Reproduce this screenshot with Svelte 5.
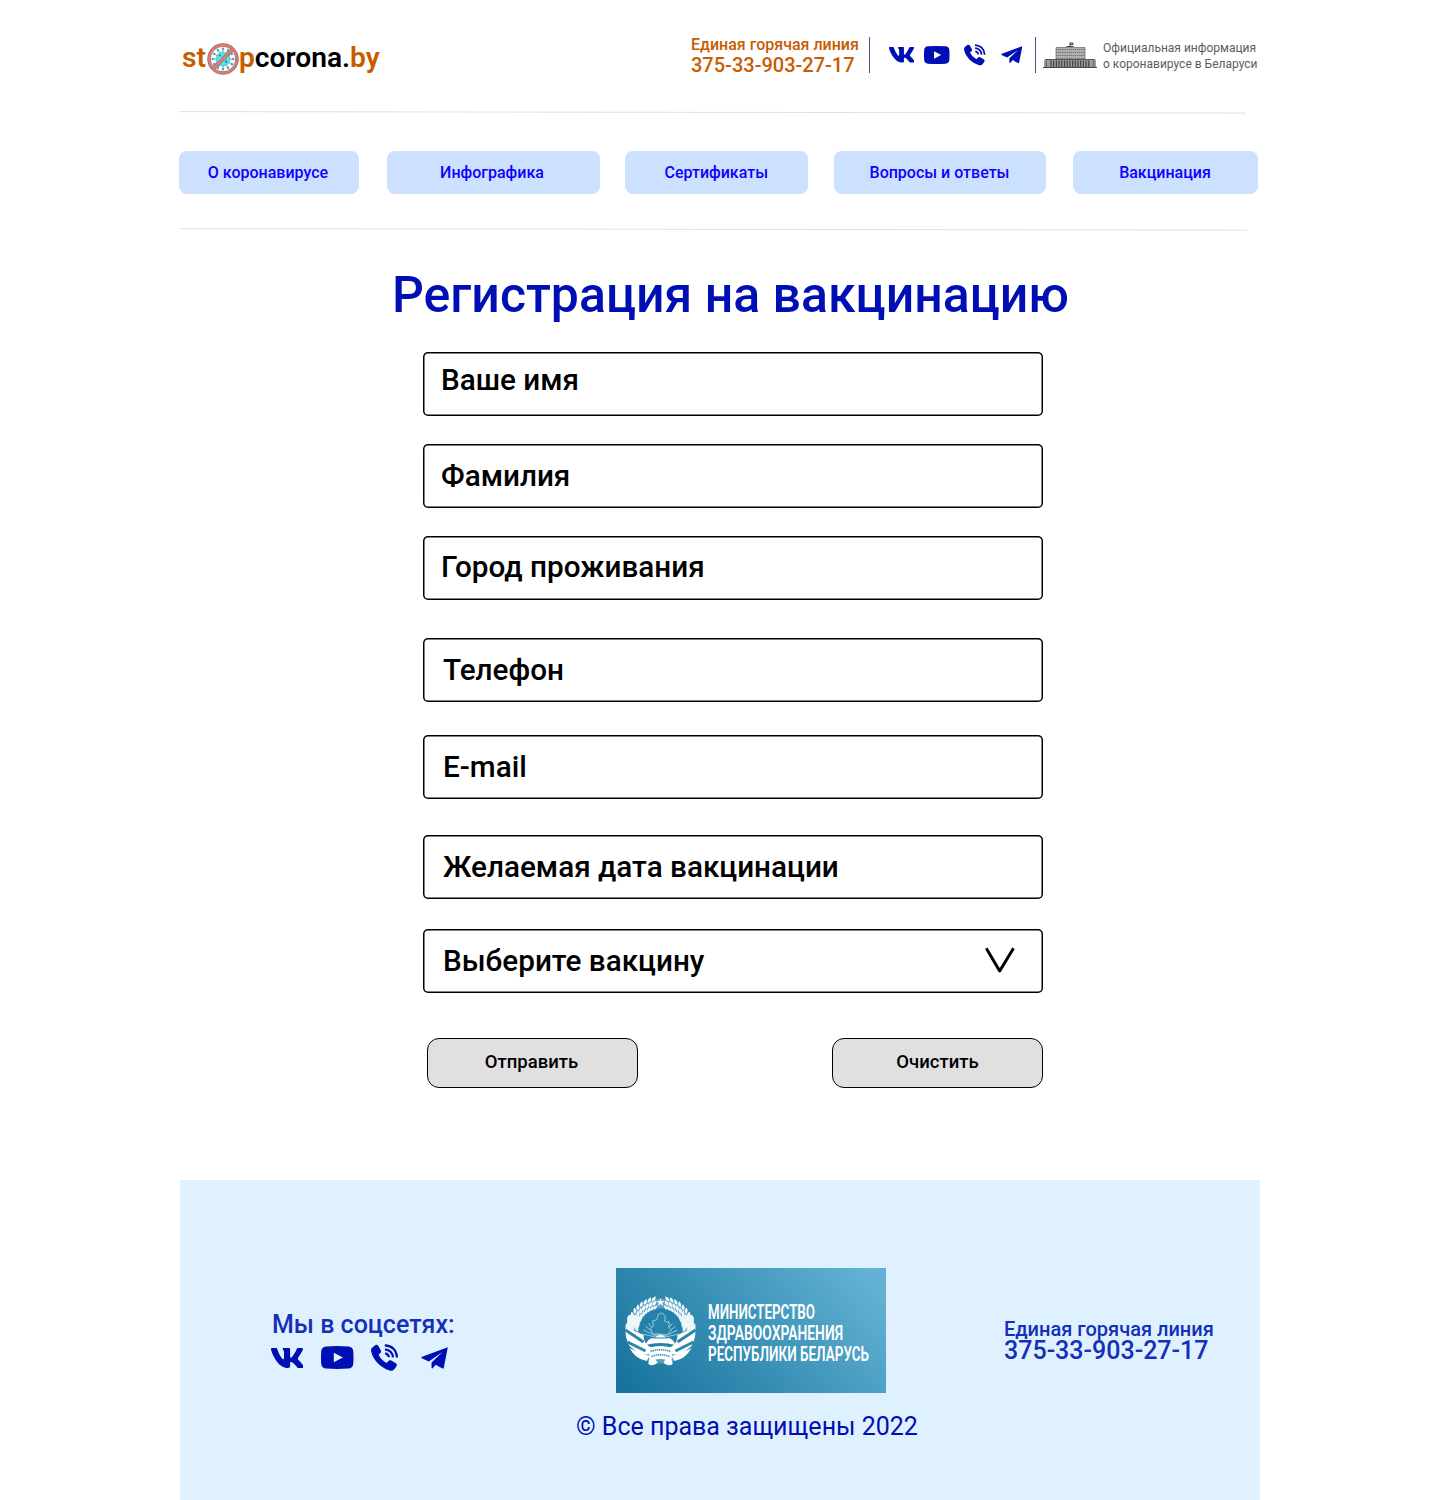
<script>
  const nav = [
    { label: 'О коронавирусе', cls: 'n1' },
    { label: 'Инфографика', cls: 'n2' },
    { label: 'Сертификаты', cls: 'n3' },
    { label: 'Вопросы и ответы', cls: 'n4' },
    { label: 'Вакцинация', cls: 'n5' }
  ];
  const fields = [
    { label: 'Ваше имя', cls: 'name' },
    { label: 'Фамилия', cls: 'surname' },
    { label: 'Город проживания', cls: 'city' },
    { label: 'Телефон', cls: 'phone' },
    { label: 'E-mail', cls: 'email' },
    { label: 'Желаемая дата вакцинации', cls: 'date' },
    { label: 'Выберите вакцину', cls: 'vaccine', select: true }
  ];
  const virusSpikes = Array.from({ length: 12 }, (_, i) => i * 30);
  const columns = Array.from({ length: 15 }, (_, i) => 8 + i * 2.7);
  const grains = Array.from({ length: 10 }, (_, i) => i);
  const rays = Array.from({ length: 13 }, (_, i) => -78 + i * 13);
</script>

{#snippet socials()}
  <svg class="vk" viewBox="18.6 96 527 320" preserveAspectRatio="none"><path d="M545 117.700c3.700-12.500 0-21.700-17.800-21.700h-58.900c-15 0-21.900 7.900-25.600 16.700 0 0-30 73.100-72.400 120.500-13.700 13.700-20 18.100-27.500 18.100-3.700 0-9.400-4.400-9.400-16.900V117.700c0-15-4.200-21.700-16.600-21.700h-92.600c-9.400 0-15 7-15 13.500 0 14.200 21.200 17.500 23.400 57.500v86.800c0 19-3.400 22.500-10.900 22.500-20 0-68.600-73.400-97.400-157.400-5.800-16.300-11.500-22.900-26.600-22.900H38.800c-16.800 0-20.200 7.900-20.200 16.700 0 15.600 20 93.100 93.100 195.500C160.400 378.100 229 416 291.400 416c37.500 0 42.100-8.400 42.100-22.900 0-66.800-3.400-73.100 15.400-73.100 8.700 0 23.700 4.400 58.700 38.100 40 40 46.600 57.900 69 57.900h58.900c16.800 0 25.300-8.400 20.400-25-11.200-34.900-86.900-106.700-90.300-111.500-8.700-11.200-6.200-16.200 0-26.200.1-.1 72-101.300 79.400-135.600z" /></svg>
  <svg class="yt" viewBox="0 0 32 23" preserveAspectRatio="none"><path fill-rule="evenodd" d="M5 .4Q16-.4 27 .4Q31.600.8 31.800 5.500Q32.200 11.500 31.800 17.500Q31.500 22.200 27 22.600Q16 23.400 5 22.600Q.5 22.200.200 17.500Q-.2 11.500.200 5.500Q.4.800 5 .4ZM12.600 6.800V16.200L21.500 11.500Z" /></svg>
  <svg class="call" viewBox="0 0 27 27">
    <path d="M1.400 3.600 4.200 1.300C5.300.5 6.600.8 7.300 1.900L9.800 6.300C10.400 7.400 10.100 8.500 9.200 9.200L7.600 10.500C9 14.200 12.200 17.500 15.800 19L17.400 17.100C18.200 16.200 19.300 16 20.300 16.600L24.800 19.300C25.900 20 26.200 21.200 25.500 22.200L23.500 25C22.300 26.600 20.600 27.200 18.500 26.500C9.500 23.500 2.400 16.500.200 7.800C-.2 6.100.2 4.600 1.400 3.600Z" />
    <path class="waves" d="M14.200 9.300C16.300 9.700 17.600 11 18 13.100M14 5.300C18.600 5.800 21.500 8.700 22 13.300M13.800 1.300C21 1.800 25.500 6.300 26 13.500" />
  </svg>
  <svg class="tg" viewBox="0 0 27 22" preserveAspectRatio="none"><path d="M26.800.2 22.600 21.800Q18.600 20.400 14.800 17.700L11.700 21.200Q10.600 21.800 10.500 20.400V15.500L21.500 5 7.800 14.400Q4 12.900.300 11Q.1 10.200 1 9.800Z" /></svg>
{/snippet}

<div class="page">
  <header>
    <div class="brand">
      <span class="orange">st</span>
      <svg class="virus" viewBox="0 0 32 32">
        <circle cx="16" cy="16" r="15.700" fill="#75706f" />
        <circle cx="16" cy="16" r="14.900" fill="#ee7770" />
        <circle cx="16" cy="16" r="12.600" fill="#5b6b73" />
        <circle cx="16" cy="16" r="12.200" fill="#fff" />
        {#each virusSpikes as a}
          <g transform="rotate({a} 16 16)">
            <path d="M16 10V6" stroke="#42636d" stroke-width=".6" />
            <circle cx="16" cy="5.700" r="1" fill="#37b4c0" stroke="#42636d" stroke-width=".3" />
          </g>
        {/each}
        <circle cx="16" cy="16" r="7" fill="#55e2ea" stroke="#36a0aa" stroke-width=".5" />
        <g fill="#278d9a"><circle cx="13" cy="12.500" r="1.100" /><circle cx="19" cy="18.500" r="1.200" /><circle cx="13.500" cy="19.500" r=".8" /><circle cx="19.500" cy="13.500" r=".8" /></g>
        <path d="M6.500 25.500 25.500 6.500" stroke="#58666b" stroke-width="3.200" />
        <path d="M6.500 25.500 25.500 6.500" stroke="#ee7770" stroke-width="2.500" />
      </svg>
      <span class="orange">p</span><span>corona.</span><span class="orange">by</span>
    </div>
    <div class="hotline">
      <span class="line">Единая горячая линия</span>
      <span class="number">375-33-903-27-17</span>
    </div>
    <div class="social">{@render socials()}</div>
    <div class="official">
      <svg class="building" viewBox="0 0 54 28">
        <path d="M27 6V1.500M27 2h3v1.500h-3M23.500 5.500h7" stroke="#444" fill="none" />
        <path d="M13 6.500h29v12.500H13z" fill="#b0b0b0" stroke="#777" stroke-width=".8" />
        <path d="M13 8.500h29M13 11.500h29M13 14.500h29M13 17.500h29" stroke="#6d6d6d" stroke-width="1.200" stroke-dasharray="1.300 .8" />
        <path d="M1 26V19h5v-1h5v1h32v-1h5v1h5v7z" fill="#999" />
        <path d="M2 18.500h50" stroke="#555" />
        {#each columns as x}
          <path d="M{x} 19.500V26" stroke="#3c3c3c" stroke-width="1.100" />
        {/each}
        <path d="M3.500 20v6M50.500 20v6" stroke="#555" stroke-width=".8" />
        <path d="M0 26.500h54" stroke="#444" stroke-width="1.200" />
      </svg>
      <div class="caption"><span class="c1">Официальная информация</span><span class="c2">о коронавирусе в Беларуси</span></div>
    </div>
  </header>

  <svg class="rule" viewBox="0 0 1068 3"><path d="M0 .6 1067 2.100" /></svg>
  <nav>
    {#each nav as item}
      <a class={item.cls} href="#top"><span>{item.label}</span></a>
    {/each}
  </nav>
  <svg class="rule second" viewBox="0 0 1068 3"><path d="M0 .6 1067 2.100" /></svg>

  <main>
    <h1>Регистрация на вакцинацию</h1>
    <form>
      {#each fields as f}
        <div class="field {f.cls}">
          <span>{f.label}</span>
          {#if f.select}
            <svg class="chevron" viewBox="0 0 30 27"><path d="M1.200 1.200 14.700 24 28.500 1.200" /></svg>
          {/if}
        </div>
      {/each}
      <div class="actions">
        <button type="button">Отправить</button>
        <button class="clear" type="button">Очистить</button>
      </div>
    </form>
  </main>

  <footer>
    <div class="follow">
      <span>Мы в соцсетях:</span>
      <div class="social big">{@render socials()}</div>
    </div>
    <div class="center">
      <svg class="ministry" viewBox="0 0 270 125">
        <defs>
          <linearGradient id="sea" gradientUnits="userSpaceOnUse" x1="35" y1="145" x2="225" y2="-25">
            <stop offset="0" stop-color="#18749d" />
            <stop offset=".5" stop-color="#3c92b8" />
            <stop offset="1" stop-color="#63b2d4" />
          </linearGradient>
        </defs>
        <rect width="270" height="125" fill="url(#sea)" />
        <g transform="translate(44.500 63)">
          <circle r="27" fill="none" stroke="#b9dbe7" stroke-width="11" opacity=".35" />
          <circle r="21" cy="-2" fill="#2681aa" />
          {#each rays as a}
            <path d="M0 7V-12" transform="rotate({a} 0 7)" stroke="#a9d2e2" stroke-width=".8" />
          {/each}
          <path d="M-8 3-10-3-7-5-8-10-4-11-2-17 2-18 5-14 4-10 9-8 8-4 11-1 6 4 0 3z" fill="#2984ac" stroke="#9dcfe1" stroke-width=".9" />
          {#each [-1, 1] as side}
            <g transform="scale({side} 1)">
              {#each grains as i}
                <g transform="rotate({8 + i * 8})">
                  <path d="M0-35Q5-34 4.200-30.500Q0-30.500 0-35ZM0-30.500Q5-30 4.200-26Q0-26 0-30.500ZM0-26Q4.500-25.500 4-22Q0-22 0-26Z" fill="#f1f9fa" />
                </g>
              {/each}
              <g fill="#edf7f9"><circle cx="29" cy="-12" r="4.500" /><circle cx="25" cy="-7" r="4" /><circle cx="31.500" cy="-5" r="3.500" /><circle cx="22" cy="-12" r="3" /></g>
              <path d="M34.800-4Q36 6 31 15L20 24 11 23 8 17Q17 14 17 4Z" fill="#fff" />
              <path d="M35-1 17 11M33 11 15 20" stroke="#2d86ac" stroke-width="3" />
              <path d="M31 17Q25 28 14 30L11 25 23 21Z" fill="#fff" />
              <path d="M5 28Q13 27 12 33Q9 36 3 32Z" fill="#fff" />
            </g>
          {/each}
          <path d="M-15 14Q-12 6-6 7Q0 1 6 7Q12 6 15 14Q0 10-15 14Z" fill="#fff" />
          <path d="M-7 7H7" stroke="#2984ac" stroke-width="1" />
          <path d="M-12 17Q0 13 12 17L11 30Q0 26-11 30Z" fill="#fff" />
          <path d="M-10 20.500Q0 17 10 20.500M-9 25.500Q0 22 9 25.500" stroke="#398fb3" fill="none" stroke-width="1.500" stroke-dasharray="1.500 .6" />
          <path d="M0-33 1-30H4L1.700-28 2.700-25 0-27-2.700-25-1.700-28-4-30H-1Z" fill="#fff" />
        </g>
        <g class="ministry-text" transform="scale(1 1.65)">
          <text x="92" y="30.700" textLength="107" lengthAdjust="spacingAndGlyphs">МИНИСТЕРСТВО</text>
          <text x="92" y="43.400" textLength="135" lengthAdjust="spacingAndGlyphs">ЗДРАВООХРАНЕНИЯ</text>
          <text x="92" y="56.100" textLength="161" lengthAdjust="spacingAndGlyphs">РЕСПУБЛИКИ БЕЛАРУСЬ</text>
        </g>
      </svg>
      <span class="rights">© Все права защищены 2022</span>
    </div>
    <div class="hotline big">
      <span class="line">Единая горячая линия</span>
      <span class="number">375-33-903-27-17</span>
    </div>
  </footer>
</div>

<style>
  :global(body) { margin: 0; background: #fff; }
  * { box-sizing: border-box; }
  svg { display: block; flex: none; }
  .page { width: 1440px; height: 1500px; overflow: hidden; font-family: Roboto, sans-serif; font-weight: 500; color: #000; background: #fff; }
  span { white-space: nowrap; }

  header { display: flex; align-items: flex-start; height: 111px; padding: 37px 0 0 182px; }
  .brand { display: flex; align-items: center; width: 509px; height: 42px; font-size: 28.200px; line-height: 42px; font-weight: 600; }
  .virus { width: 32px; height: 32px; margin: 2px 0 0 1px; }
  .orange { color: #c65d00; }
  .hotline { display: flex; flex-direction: column; width: 179px; height: 36px; color: #c65d00; font-size: 16px; line-height: 16px; border-right: 1px solid #4d4d86; }
  .hotline .number { font-size: 20px; line-height: 24px; }
  .social { display: flex; align-items: flex-start; width: 166px; height: 36px; padding-left: 19px; border-right: 1px solid #4d4d86; fill: #000fb4; }
  .vk { width: 25px; height: 15.500px; margin-top: 10px; }
  .yt { width: 25.500px; height: 18px; margin: 9px 0 0 10px; }
  .call { width: 21.500px; height: 21.500px; margin: 7px 0 0 14.500px; }
  .waves { fill: none; stroke: #000fb4; stroke-width: 2.200; }
  .tg { width: 21.500px; height: 17.500px; margin: 9px 0 0 15px; }
  .official { display: flex; padding-left: 7px; color: #5d5d5d; }
  .building { width: 54px; height: 28px; margin-top: 4px; }
  .caption { display: flex; flex-direction: column; margin: 3px 0 0 6px; font-size: 12px; line-height: 16px; font-weight: 400; }

  .rule { width: 1068px; height: 3px; margin-left: 179px; }
  .rule.second { margin-left: 180px; }
  .rule path { stroke: #e0e0e0; stroke-width: 1; fill: none; }
  nav { display: flex; height: 114px; padding: 37px 0 0 179px; }
  nav a { display: flex; align-items: center; justify-content: center; height: 42.500px; padding-top: 1px; border-radius: 8px; background: #cce0ff; color: #1000ff; font-size: 16px; line-height: 20px; text-decoration: none; }
  .n1 { width: 180px; padding-right: 2px; }
  .n2 { width: 213px; margin-left: 27.500px; padding-right: 2px; }
  .n3 { width: 183.500px; margin-left: 25px; }
  .n4 { width: 212px; margin-left: 26px; padding-right: 1px; }
  .n5 { width: 185px; margin-left: 27px; padding-right: 1px; }

  main { width: 676px; margin-left: 392px; }
  h1 { margin: 0; padding-top: 34px; height: 120.500px; font-size: 50px; line-height: 60px; font-weight: 500; color: #000fb4; white-space: nowrap; }
  form { width: 620px; margin-left: 31px; }
  .field { display: flex; align-items: center; justify-content: space-between; width: 620px; height: 64px; padding: 0 28px 0 20px; border-radius: 5px; box-shadow: inset 0 0 0 1.500px #000; font-size: 29.700px; line-height: 36px; }
  .name { padding: 0 0 8px 18px; }
  .surname { margin-top: 28px; padding: 1px 0 0 18px; }
  .city { margin-top: 28px; padding: 0 0 1px 18px; }
  .phone { margin-top: 38.500px; }
  .email { margin-top: 33px; }
  .date { margin-top: 36px; }
  .vaccine { margin-top: 30px; }
  .chevron { width: 30px; height: 27px; margin-bottom: 2px; fill: none; stroke: #000; stroke-width: 3; stroke-linejoin: round; }
  .actions { display: flex; justify-content: space-between; padding: 45px 0 0 4px; }
  button { width: 211px; height: 50px; padding: 0 2px 2px 0; border: 1px solid #000; border-radius: 12px; background: #e0e0e0; font: 500 18.500px/22px Roboto, sans-serif; color: #000; }
  button.clear { padding-right: 0; }

  footer { display: flex; width: 1080px; height: 320px; margin: 92px 0 0 180px; background: #dff1ff; color: #1430b8; }
  .follow { width: 304px; padding: 130px 0 0 92px; font-size: 25px; line-height: 30px; }
  .social.big { width: 190px; margin-left: -1px; padding: 0; border: 0; }
  .big .vk { width: 32px; height: 20px; margin-top: 8px; }
  .big .yt { width: 32.500px; height: 23px; margin: 6px 0 0 18px; }
  .big .call { width: 27px; height: 27px; margin: 4px 0 0 17px; }
  .big .tg { width: 27px; height: 22px; margin: 7px 0 0 23px; }
  .center { display: flex; flex-direction: column; width: 520px; padding: 88px 0 0 92px; }
  .ministry { width: 270px; height: 125px; margin-left: 40px; }
  .ministry-text { fill: #fff; font: 600 12.500px Roboto, sans-serif; }
  .rights { margin-top: 19px; font-size: 25px; line-height: 30px; font-weight: 400; color: #000fb4; }
  .hotline.big { width: 210px; height: auto; padding-top: 139px; color: #1430b8; border: 0; font-size: 20px; line-height: 20px; }
  .hotline.big .number { font-size: 25px; line-height: 24px; }
</style>
